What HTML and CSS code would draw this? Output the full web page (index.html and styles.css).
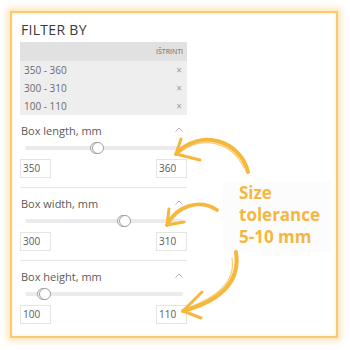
FILE: index.html
```html
<!DOCTYPE html>
<html>
<head>
<meta charset="utf-8">
<link rel="stylesheet" href="styles.css">
</head>
<body>
<div class="card">
  <div class="col">
    <h2 class="title">FILTER BY</h2>
    <div class="chips">
      <div class="chips-head">IŠTRINTI</div>
      <div class="chip"><span>350 - 360</span><span class="x">×</span></div>
      <div class="chip"><span>300 - 310</span><span class="x">×</span></div>
      <div class="chip"><span>100 - 110</span><span class="x">×</span></div>
    </div>
    <div class="section">
      <div class="sec-head"><span>Box length, mm</span><svg class="caret" width="8" height="5" viewBox="0 0 8 5"><path d="M0.5 4.5 L4 1 L7.5 4.5" fill="none" stroke="#b5b5b5" stroke-width="1"/></svg></div>
      <div class="slider"><div class="track"></div><span class="thumb" style="left:70px"></span></div>
      <div class="inputs"><div class="box">350</div><div class="box">360</div></div>
    </div>
    <div class="section">
      <div class="sec-head"><span>Box width, mm</span><svg class="caret" width="8" height="5" viewBox="0 0 8 5"><path d="M0.5 4.5 L4 1 L7.5 4.5" fill="none" stroke="#b5b5b5" stroke-width="1"/></svg></div>
      <div class="slider"><div class="track"></div><span class="thumb" style="left:97px"></span></div>
      <div class="inputs"><div class="box">300</div><div class="box">310</div></div>
    </div>
    <div class="section last">
      <div class="sec-head"><span>Box height, mm</span><svg class="caret" width="8" height="5" viewBox="0 0 8 5"><path d="M0.5 4.5 L4 1 L7.5 4.5" fill="none" stroke="#b5b5b5" stroke-width="1"/></svg></div>
      <div class="slider"><div class="track"></div><span class="thumb" style="left:17px"></span></div>
      <div class="inputs"><div class="box">100</div><div class="box">110</div></div>
    </div>
  </div>
</div>
<div class="note">Size<br>tolerance<br>5-10 mm</div>
<svg class="arrows" width="350" height="350" viewBox="0 0 350 350">
  <g fill="none" stroke="#f6b73d" stroke-linecap="round" stroke-linejoin="round">
    <path d="M248 172 C 240 140 200 128 176 154" stroke-width="4"/>
    <path d="M244 168 C 232 142 203 135 180 152" stroke-width="1.2" opacity="0.7"/>
    <path d="M176 154 L181 139 M176 154 L200 160" stroke-width="3"/>
    <path d="M217 210 C 200 199 177 205 167 225" stroke-width="3.8"/>
    <path d="M167 225 L169 209 M167 225 L184 222" stroke-width="3"/>
    <path d="M236 252 C 241 285 216 302 183 311" stroke-width="4"/>
    <path d="M232 258 C 236 284 214 298 188 308" stroke-width="1.2" opacity="0.7"/>
    <path d="M183 311 L202 292 M183 311 L201 318" stroke-width="3"/>
  </g>
</svg>
</body>
</html>
```

FILE: styles.css
```css
html, body {
  margin: 0;
  padding: 0;
  background: #ffffff;
  width: 350px;
  height: 350px;
  overflow: hidden;
  position: relative;
  font-family: "Open Sans", "DejaVu Sans", sans-serif;
}
.card {
  box-sizing: border-box;
  margin: 11px 0 0 10px;
  width: 328px;
  height: 327px;
  border: 2px solid #fbc96f;
  box-shadow: 0 0 6px 3px rgba(251, 205, 120, 0.5), inset 0 0 3px rgba(251, 205, 120, 0.5);
  background: #fff;
  padding: 8px 0 0 8px;
}
.col {
  width: 167px;
}
.title {
  margin: 0 0 3px 1px;
  font-size: 14px;
  line-height: 18px;
  font-weight: 400;
  color: #3a3a3a;
  letter-spacing: 0.3px;
}
.chips {
  background: #eeeeee;
}
.chips-head {
  background: #e1e1e1;
  height: 19px;
  line-height: 19px;
  font-size: 7px;
  color: #666;
  text-align: right;
  padding-right: 4px;
}
.chip {
  display: flex;
  justify-content: space-between;
  align-items: center;
  height: 18px;
  padding: 0 5px 0 4px;
  font-size: 10px;
  color: #6a6a6a;
}
.chip .x {
  font-size: 10px;
  color: #9a9a9a;
}
.section {
  padding: 7px 0 9px;
  border-bottom: 1px solid #e6e6e6;
}
.section.last {
  border-bottom: none;
}
.sec-head {
  display: flex;
  justify-content: space-between;
  align-items: center;
  height: 16px;
  font-size: 11px;
  color: #5a5a5a;
  padding: 0 4px 0 1px;
}
.caret {
  display: block;
  margin-top: -2px;
}
.slider {
  position: relative;
  height: 20px;
  display: flex;
  align-items: center;
}
.track {
  flex: 1;
  height: 4px;
  margin: 0 4px 0 5px;
  background: #ebebeb;
  border-radius: 2px;
}
.thumb {
  position: absolute;
  top: 4px;
  width: 10px;
  height: 10px;
  border: 1px solid #a0a0a0;
  border-radius: 50%;
  background: #fff;
}
.thumb::after {
  content: "";
  position: absolute;
  left: 1px;
  top: -1px;
  width: 10px;
  height: 10px;
  border: 1px solid #a0a0a0;
  border-radius: 50%;
  background: #fff;
}
.inputs {
  display: flex;
  justify-content: space-between;
  margin-top: 1px;
}
.box {
  box-sizing: border-box;
  width: 31px;
  height: 19px;
  border: 1px solid #e4e4e4;
  font-size: 10px;
  line-height: 17px;
  color: #5a5a5a;
  padding-left: 2px;
}
.note {
  position: absolute;
  left: 223px;
  top: 182px;
  width: 93px;
  padding: 0 0 4px 16px;
  background: #fcfcfc;
  font-family: "Open Sans", "DejaVu Sans", sans-serif;
  font-weight: 700;
  font-size: 17px;
  line-height: 22px;
  color: #f5b73f;
}
.arrows {
  position: absolute;
  left: 0;
  top: 0;
}
```
